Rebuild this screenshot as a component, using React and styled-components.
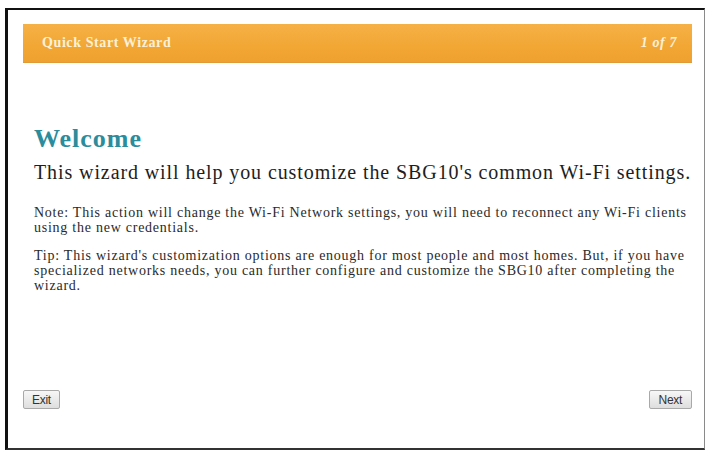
import React from 'react';
import styled, { createGlobalStyle } from 'styled-components';

const GlobalStyle = createGlobalStyle`
  html, body {
    margin: 0;
    padding: 0;
    background: #ffffff;
  }
  body {
    font-family: "Liberation Serif", "Times New Roman", serif;
  }
`;

const Page = styled.div`
  width: 709px;
  height: 451px;
  padding: 8px 4px 1px 5px;
  box-sizing: border-box;
`;

const Frame = styled.div`
  height: 100%;
  box-sizing: border-box;
  border-top: 2px solid #111;
  border-left: 3px solid #111;
  border-right: 1px solid #8a8a8a;
  border-bottom: 2px solid #333;
  padding: 14px 12px 0 15px;
  display: flex;
  flex-direction: column;
`;

const Header = styled.div`
  height: 38px;
  display: flex;
  align-items: center;
  justify-content: space-between;
  padding: 0 15px 0 19px;
  background: linear-gradient(180deg, #f6b146 0%, #f2a634 60%, #efa12f 100%);
  border-bottom: 1px solid #e19a36;
  color: #fcf1d6;
  font-size: 14px;
  font-weight: bold;
  letter-spacing: 0.6px;
`;

const Counter = styled.span`
  font-style: italic;
  font-weight: bold;
`;

const Content = styled.div`
  padding: 61px 0 0 11px;
  flex: 1;
  color: #222;
`;

const Title = styled.h1`
  margin: 0;
  font-size: 26px;
  line-height: 30px;
  font-weight: bold;
  letter-spacing: 1px;
  color: #2b8c9c;
`;

const Lead = styled.p`
  margin: 6px 0 21px;
  font-size: 20px;
  line-height: 24px;
  letter-spacing: 0.9px;
  white-space: nowrap;
  color: #1e1e1e;
`;

const Small = styled.p`
  margin: 0 0 13px;
  font-size: 14px;
  line-height: 15px;
  letter-spacing: 0.75px;
  color: #2a2a2a;
`;

const Footer = styled.div`
  display: flex;
  justify-content: space-between;
  align-items: center;
  padding: 0 0 39px 0;
`;

const Button = styled.button`
  height: 19px;
  padding: 0 ${(p) => p.pad}px;
  font-family: "Liberation Sans", Arial, sans-serif;
  font-size: 12px;
  letter-spacing: -0.3px;
  color: #333;
  background: linear-gradient(180deg, #f7f7f7, #dedede);
  border: 1px solid #a9a9a9;
  border-radius: 2px;
`;

export default function App() {
  return (
    <>
      <GlobalStyle />
      <Page>
        <Frame>
          <Header>
            <span>Quick Start Wizard</span>
            <Counter>1 of 7</Counter>
          </Header>
          <Content>
            <Title>Welcome</Title>
            <Lead>This wizard will help you customize the SBG10's common Wi-Fi settings.</Lead>
            <Small>
              Note: This action will change the Wi-Fi Network settings, you will need to reconnect any Wi-Fi clients
              using the new credentials.
            </Small>
            <Small>
              Tip: This wizard's customization options are enough for most people and most homes. But, if you have
              specialized networks needs, you can further configure and customize the SBG10 after completing the
              wizard.
            </Small>
          </Content>
          <Footer>
            <Button pad={8}>Exit</Button>
            <Button pad={9}>Next</Button>
          </Footer>
        </Frame>
      </Page>
    </>
  );
}
